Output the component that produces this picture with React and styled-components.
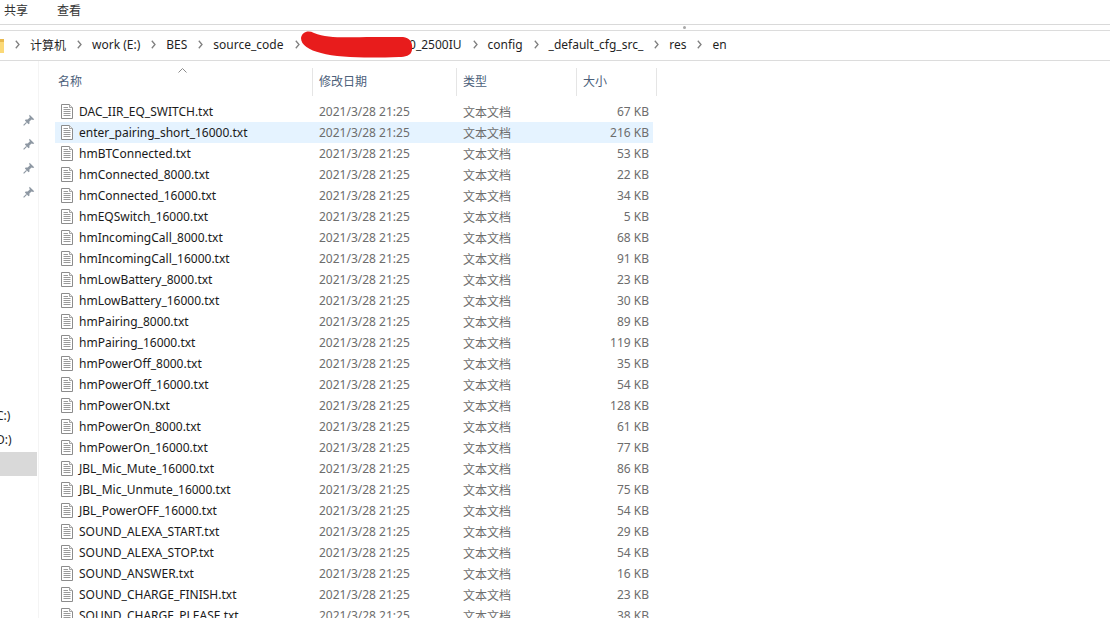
import React from "react";
import styled, { createGlobalStyle } from "styled-components";

const FONT = `"Noto Sans", "Open Sans", "Noto Sans CJK SC", sans-serif`;

const files = [
  ["DAC_IIR_EQ_SWITCH.txt", "67 KB"],
  ["enter_pairing_short_16000.txt", "216 KB"],
  ["hmBTConnected.txt", "53 KB"],
  ["hmConnected_8000.txt", "22 KB"],
  ["hmConnected_16000.txt", "34 KB"],
  ["hmEQSwitch_16000.txt", "5 KB"],
  ["hmIncomingCall_8000.txt", "68 KB"],
  ["hmIncomingCall_16000.txt", "91 KB"],
  ["hmLowBattery_8000.txt", "23 KB"],
  ["hmLowBattery_16000.txt", "30 KB"],
  ["hmPairing_8000.txt", "89 KB"],
  ["hmPairing_16000.txt", "119 KB"],
  ["hmPowerOff_8000.txt", "35 KB"],
  ["hmPowerOff_16000.txt", "54 KB"],
  ["hmPowerON.txt", "128 KB"],
  ["hmPowerOn_8000.txt", "61 KB"],
  ["hmPowerOn_16000.txt", "77 KB"],
  ["JBL_Mic_Mute_16000.txt", "86 KB"],
  ["JBL_Mic_Unmute_16000.txt", "75 KB"],
  ["JBL_PowerOFF_16000.txt", "54 KB"],
  ["SOUND_ALEXA_START.txt", "29 KB"],
  ["SOUND_ALEXA_STOP.txt", "54 KB"],
  ["SOUND_ANSWER.txt", "16 KB"],
  ["SOUND_CHARGE_FINISH.txt", "23 KB"],
  ["SOUND_CHARGE_PLEASE.txt", "38 KB"],
];

const crumbsBefore = ["计算机", "work (E:)", "BES", "source_code"];
const crumbsAfter = ["config", "_default_cfg_src_", "res", "en"];

export default function App() {
  return (
    <Page>
      <GlobalStyle />
      <Ribbon>
        <RibbonTab>共享</RibbonTab>
        <RibbonTab>查看</RibbonTab>
      </Ribbon>
      <Gripper>
        <GripDot />
      </Gripper>
      <Breadcrumb>
        <FolderIcon />
        {crumbsBefore.map((c) => (
          <React.Fragment key={c}>
            <Chevron />
            <Crumb>{c}</Crumb>
          </React.Fragment>
        ))}
        <Chevron />
        <HiddenCrumb>0_2500IU</HiddenCrumb>
        <Scribble viewBox="0 0 116 28">
          <path
            d="M2 8 C3 2 9 0 15 3 C30 9 50 7 75 7 L104 7 C112 8 114 14 113 20 C112 26 106 27 100 27 C70 28 40 28 22 23 C10 20 2 15 2 8 Z"
            fill="#e81c1c"
          />
        </Scribble>
        {crumbsAfter.map((c) => (
          <React.Fragment key={c}>
            <Chevron />
            <Crumb>{c}</Crumb>
          </React.Fragment>
        ))}
      </Breadcrumb>
      <Main>
        <Sidebar>
          <Pins>
            <PinIcon />
            <PinIcon />
            <PinIcon />
            <PinIcon />
          </Pins>
          <Drives>
            <DriveRow>C:)</DriveRow>
            <DriveRow>D:)</DriveRow>
            <DriveRow $selected />
          </Drives>
        </Sidebar>
        <FileList>
          <HeaderRow>
            <HeaderCell $width={258} $first>
              名称
              <SortCaret viewBox="0 0 9 5">
                <path d="M0.5 4.5 L4.5 0.5 L8.5 4.5" fill="none" stroke="#8a8a8a" />
              </SortCaret>
            </HeaderCell>
            <HeaderCell $width={144}>修改日期</HeaderCell>
            <HeaderCell $width={120}>类型</HeaderCell>
            <HeaderCell $width={80}>大小</HeaderCell>
          </HeaderRow>
          <Rows>
            {files.map(([name, size], i) => (
              <Row key={name} $active={i === 1}>
                <NameCell>
                  <DocIcon />
                  {name}
                </NameCell>
                <DateCell>2021/3/28 21:25</DateCell>
                <TypeCell>文本文档</TypeCell>
                <SizeCell>{size}</SizeCell>
              </Row>
            ))}
          </Rows>
        </FileList>
      </Main>
    </Page>
  );
}

function FolderIcon() {
  return (
    <FolderSvg viewBox="0 0 16 16">
      <path d="M0 0 H7 L9 2 H16 V16 H0 Z" fill="#e9b94e" />
      <path d="M0 5 H16 V16 H0 Z" fill="#fbd978" />
    </FolderSvg>
  );
}

function Chevron() {
  return (
    <ChevronSvg viewBox="0 0 5 9">
      <path d="M0.8 0.8 L4 4.5 L0.8 8.2" fill="none" stroke="#808080" strokeWidth="1.3" />
    </ChevronSvg>
  );
}

function DocIcon() {
  return (
    <DocSvg viewBox="0 0 12 15">
      <path d="M0.5 0.5 H8.5 L11.5 3.5 V14.5 H0.5 Z" fill="#fff" stroke="#8c8c8c" />
      <path d="M8.5 0.5 V3.5 H11.5" fill="#eee" stroke="#a5a5a5" />
      <path d="M2.5 3.5 H7 M2.5 5.5 H9.5 M2.5 7.5 H9.5 M2.5 9.5 H9.5 M2.5 11.5 H9.5" stroke="#9a9a9a" />
    </DocSvg>
  );
}

function PinIcon() {
  return (
    <PinSvg viewBox="0 0 12 12">
      <path
        d="M6.6 0.8 L11.2 5.2 L10.2 5.9 L8.6 5.4 L6.4 7.5 L6.5 9.6 L5.6 10.2 L1.9 6.5 L2.6 5.6 L4.6 5.6 L6.8 3.4 L6.2 1.8 Z"
        fill="#8e98a3"
      />
      <path d="M3.6 8.4 L0.6 11.4" stroke="#8e98a3" strokeWidth="1.2" />
    </PinSvg>
  );
}

const GlobalStyle = createGlobalStyle`
  html, body {
    margin: 0;
    padding: 0;
    background: #fff;
  }
`;

const Page = styled.div`
  width: 1110px;
  height: 618px;
  overflow: hidden;
  background: #fff;
  font-family: ${FONT};
  font-size: 12px;
  color: #1a1a1a;
`;

const Ribbon = styled.div`
  height: 21px;
  display: flex;
  align-items: flex-start;
  gap: 29px;
  padding: 3px 0 0 4px;
  border-bottom: 1px solid #d9d9d9;
`;

const RibbonTab = styled.div`
  font-size: 12px;
  line-height: 16px;
  color: #333;
`;

const Gripper = styled.div`
  height: 5px;
  padding-left: 683px;
  display: flex;
  align-items: center;
`;

const GripDot = styled.div`
  width: 3px;
  height: 3px;
  border-radius: 50%;
  background: #a8a8a8;
`;

const Breadcrumb = styled.div`
  position: relative;
  height: 27px;
  padding-bottom: 2px;
  display: flex;
  align-items: center;
  border-top: 1px solid #dcdcdc;
  border-bottom: 1px solid #dcdcdc;
  overflow: hidden;
`;

const FolderSvg = styled.svg`
  width: 16px;
  height: 16px;
  margin-left: -12px;
  flex: none;
`;

const ChevronSvg = styled.svg`
  width: 5px;
  height: 9px;
  margin: 0 10px 0 11px;
  flex: none;
`;

const Crumb = styled.span`
  font-size: 12px;
  color: #1f1f1f;
  white-space: nowrap;
`;

const HiddenCrumb = styled(Crumb)`
  width: 152px;
  text-align: right;
  flex: none;
`;

const Scribble = styled.svg`
  position: absolute;
  left: 298px;
  top: -1px;
  width: 118px;
  height: 28px;
`;

const Main = styled.div`
  display: flex;
  height: 557px;
`;

const Sidebar = styled.div`
  width: 39px;
  flex: none;
  box-sizing: border-box;
  border-right: 1px solid #f4f4f4;
  display: flex;
  flex-direction: column;
  overflow: hidden;
`;

const Pins = styled.div`
  display: flex;
  flex-direction: column;
  align-items: flex-end;
  gap: 12px;
  padding: 53px 3px 0 0;
`;

const PinSvg = styled.svg`
  width: 12px;
  height: 12px;
`;

const Drives = styled.div`
  margin-top: 206px;
`;

const DriveRow = styled.div`
  width: 37px;
  height: 24px;
  line-height: 24px;
  font-size: 12px;
  color: #1f1f1f;
  text-indent: -4px;
  background: ${(p) => (p.$selected ? "#d9d9d9" : "transparent")};
`;

const FileList = styled.div`
  margin-left: 16px;
  width: 602px;
  flex: none;
`;

const HeaderRow = styled.div`
  display: flex;
  height: 33px;
  margin-top: 7px;
`;

const HeaderCell = styled.div`
  position: relative;
  box-sizing: border-box;
  width: ${(p) => p.$width}px;
  padding-left: ${(p) => (p.$first ? 3 : 6)}px;
  height: 28px;
  line-height: 28px;
  font-size: 12px;
  color: #4c607a;
  border-right: 1px solid #e5e5e5;
`;

const SortCaret = styled.svg`
  position: absolute;
  left: 123px;
  top: 0;
  width: 9px;
  height: 5px;
`;

const Rows = styled.div`
  display: flex;
  flex-direction: column;
`;

const Row = styled.div`
  display: flex;
  align-items: center;
  width: 598px;
  height: 21px;
  flex: none;
  background: ${(p) => (p.$active ? "#e5f3ff" : "transparent")};
`;

const NameCell = styled.div`
  display: flex;
  align-items: center;
  width: 264px;
  box-sizing: border-box;
  padding-left: 6px;
  color: #1a1a1a;
  white-space: nowrap;
`;

const DocSvg = styled.svg`
  width: 12px;
  height: 15px;
  margin-right: 6px;
  flex: none;
`;

const DateCell = styled.div`
  width: 144px;
  color: #6d6d6d;
`;

const TypeCell = styled.div`
  width: 100px;
  color: #6d6d6d;
`;

const SizeCell = styled.div`
  width: 86px;
  text-align: right;
  color: #6d6d6d;
`;
